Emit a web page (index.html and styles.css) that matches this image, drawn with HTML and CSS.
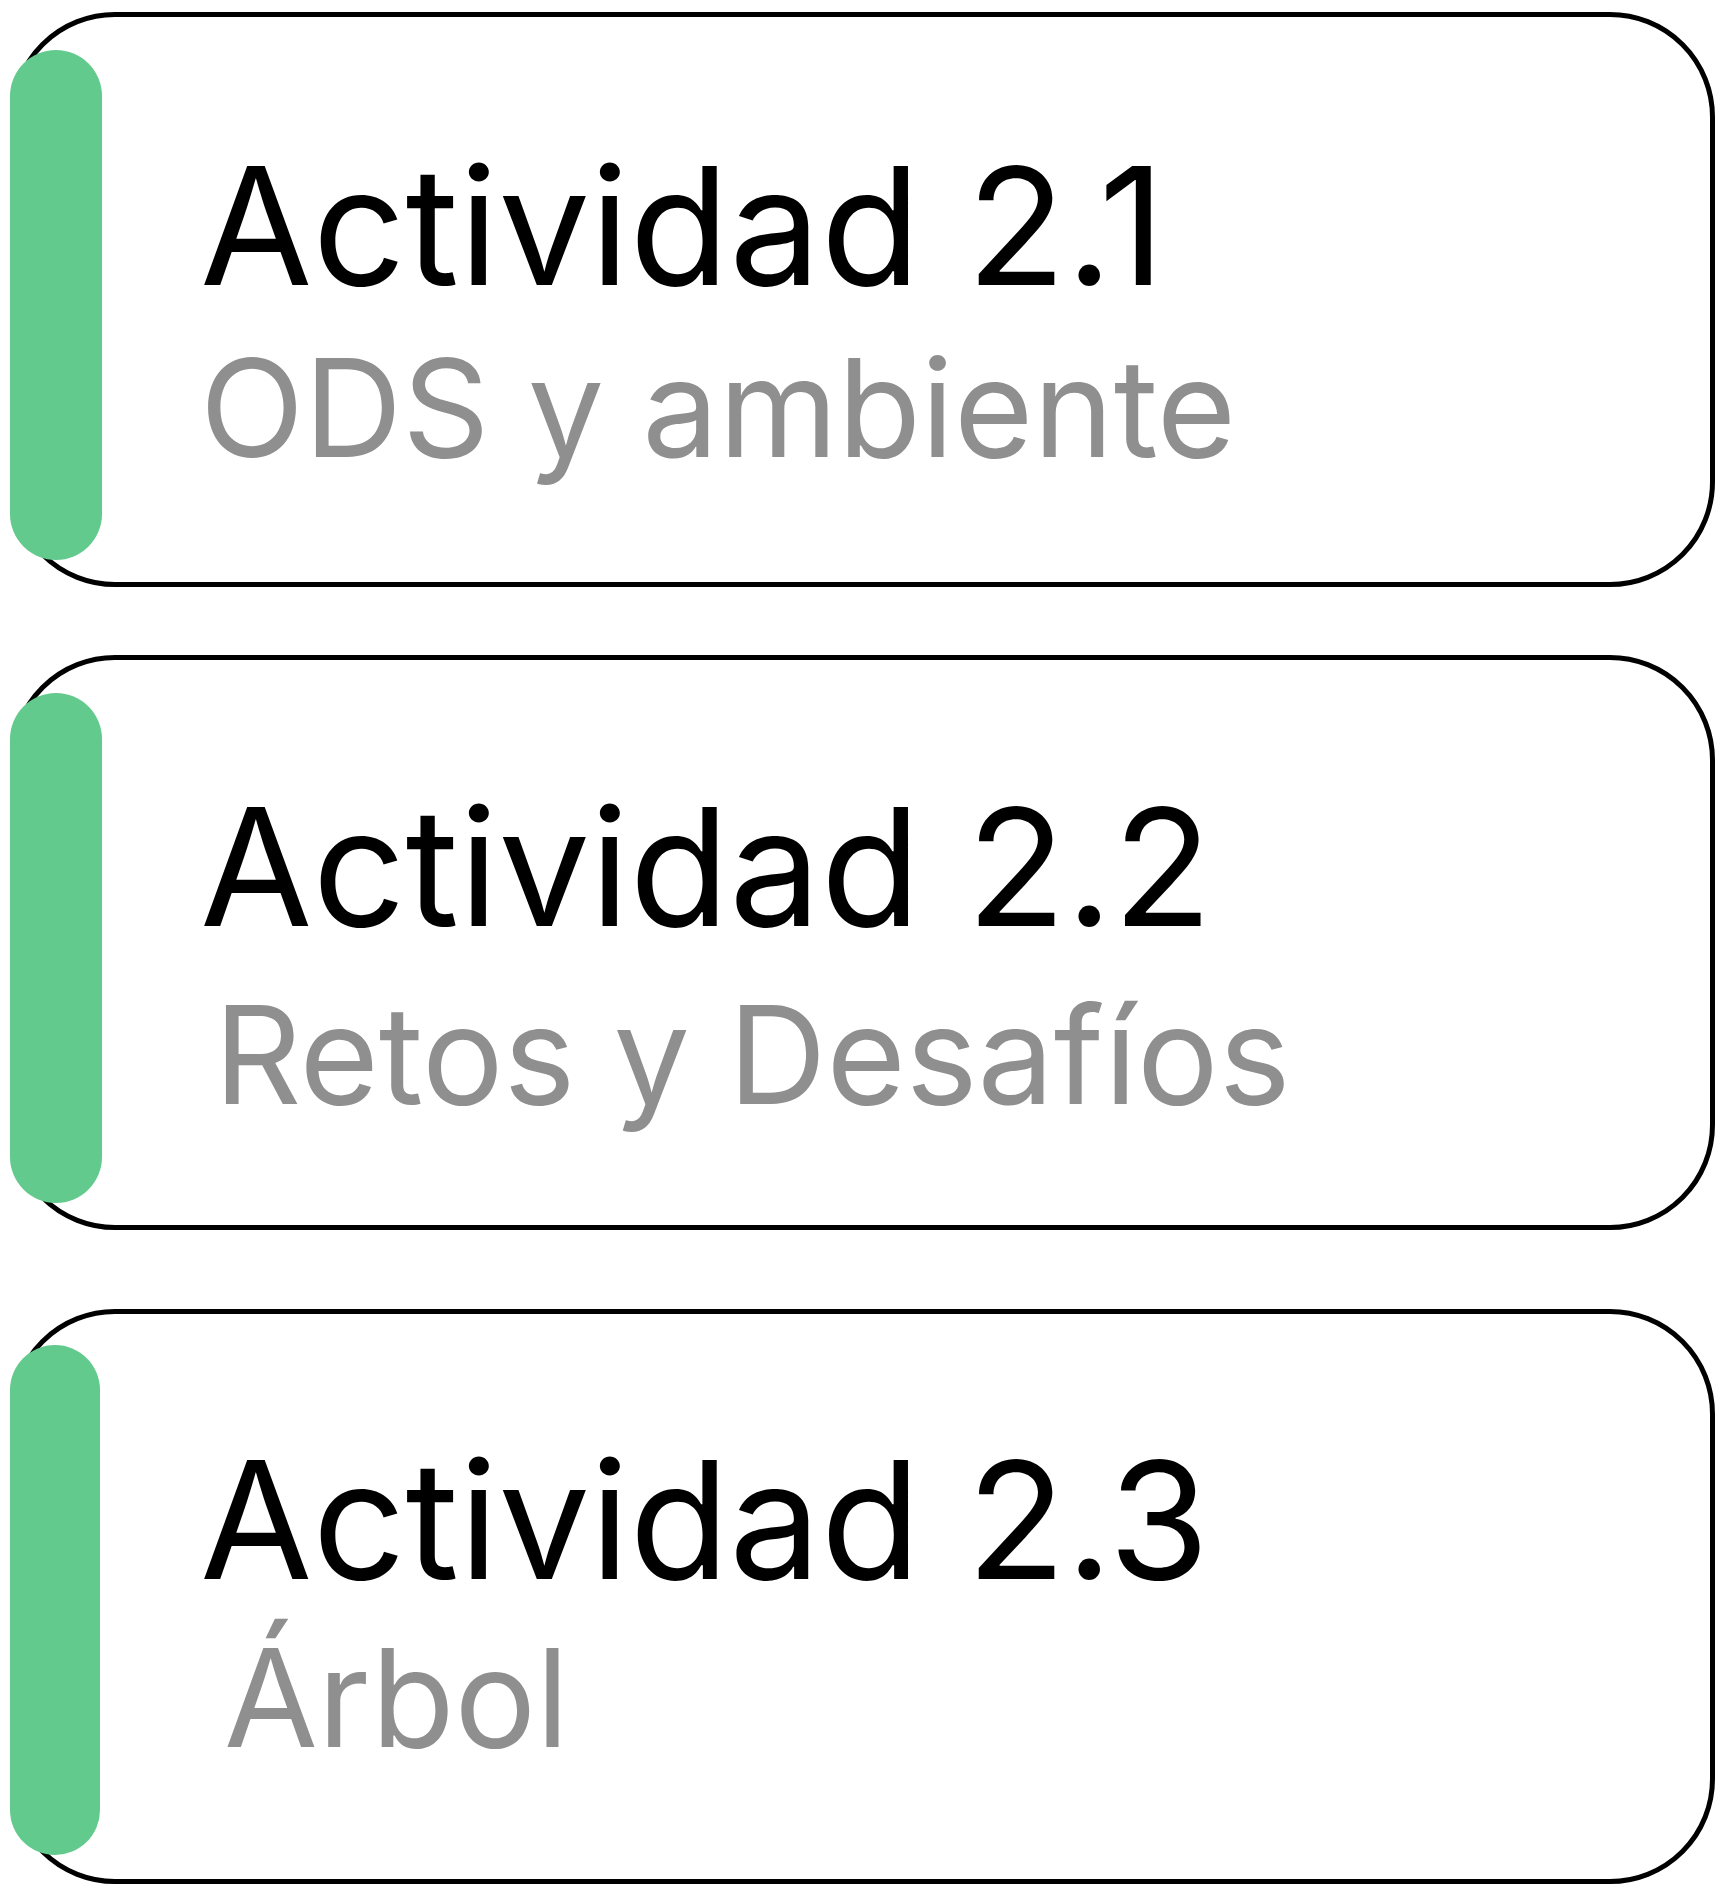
FILE: index.html
```html
<!DOCTYPE html>
<html lang="es">
<head>
<meta charset="utf-8">
<title>Actividades</title>
<link rel="stylesheet" href="styles.css">
</head>
<body>
<main class="list">
  <article class="card card--first">
    <span class="card__bar"></span>
    <h2 class="card__title">Actividad 2.1</h2>
    <p class="card__subtitle card__subtitle--a">ODS y ambiente</p>
  </article>
  <article class="card card--second">
    <span class="card__bar"></span>
    <h2 class="card__title">Actividad 2.2</h2>
    <p class="card__subtitle card__subtitle--b">Retos y Desafíos</p>
  </article>
  <article class="card card--third">
    <span class="card__bar card__bar--narrow"></span>
    <h2 class="card__title">Actividad 2.3</h2>
    <p class="card__subtitle card__subtitle--c">Árbol</p>
  </article>
</main>
</body>
</html>
```

FILE: styles.css
```css
html, body {
  margin: 0;
  padding: 0;
  background: #ffffff;
}

body {
  font-family: Inter, "Noto Sans", "Liberation Sans", sans-serif;
  width: 1732px;
  height: 1900px;
  overflow: hidden;
}

.list {
  display: flex;
  flex-direction: column;
  padding: 12px 17px 0 10px;
}

.card {
  position: relative;
  box-sizing: border-box;
  height: 575px;
  border: 5px solid #000;
  border-radius: 105px;
  padding: 127px 0 0 185px;
  background: #fff;
}

.card--second {
  margin-top: 68px;
  padding-top: 125px;
}

.card--third {
  margin-top: 79px;
  padding-top: 124px;
}

.card__bar {
  position: absolute;
  left: -5px;
  top: 33px;
  width: 92px;
  height: 510px;
  border-radius: 46px;
  background: #63ca8d;
}

.card__bar--narrow {
  width: 90px;
  top: 31px;
}

.card__title {
  margin: 0;
  font-size: 163px;
  line-height: 1;
  font-weight: 400;
  color: #000;
  letter-spacing: 0;
}

.card__subtitle {
  margin: 33px 0 0 0;
  font-size: 136px;
  line-height: 1;
  font-weight: 400;
  color: #8f8f8f;
}

.card__subtitle--a {
  margin-left: 0;
}

.card__subtitle--b {
  margin-top: 39px;
  margin-left: 14px;
}

.card__subtitle--c {
  margin-top: 29px;
  margin-left: 24px;
}
```
